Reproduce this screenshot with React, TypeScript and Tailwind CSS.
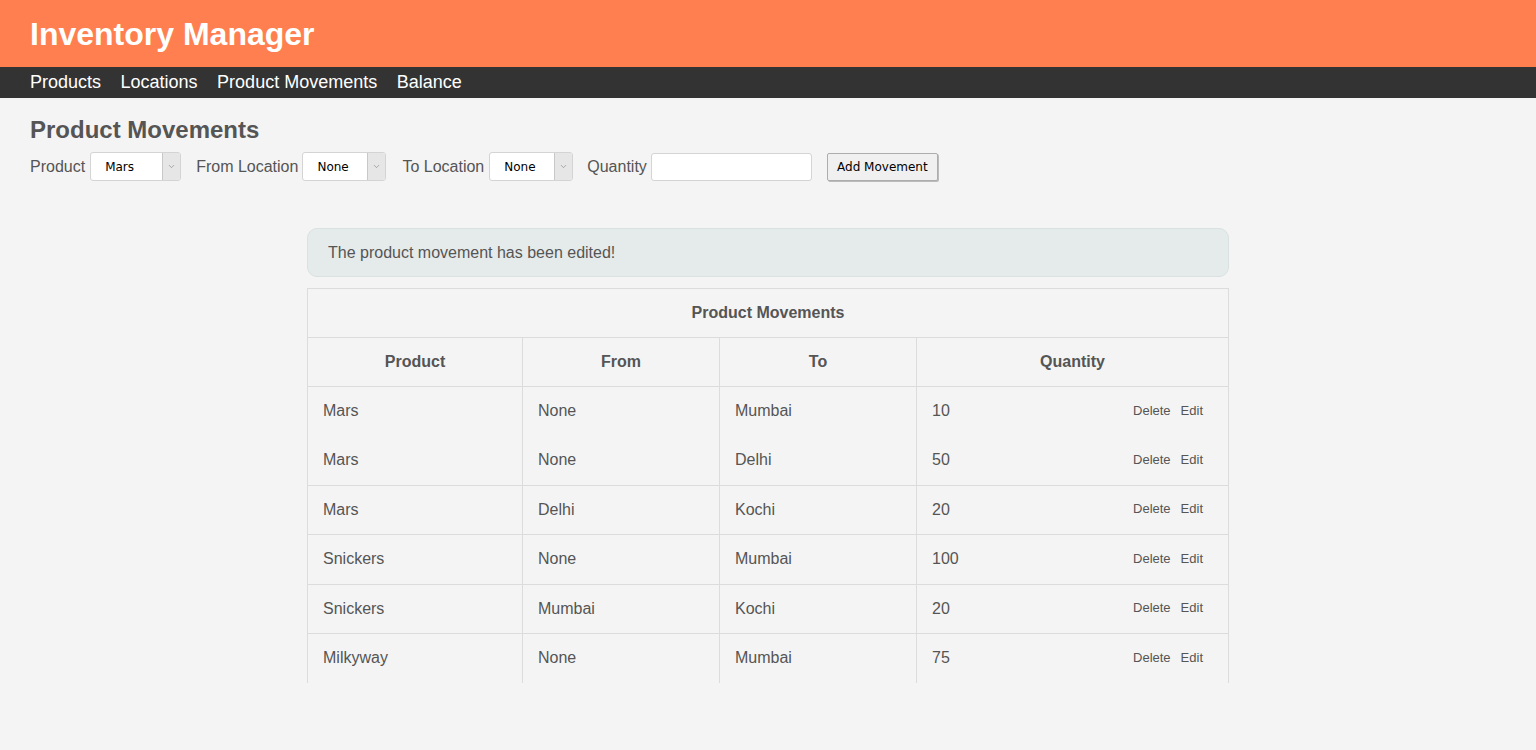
import { ChevronDown } from "lucide-react";

const rows = [
  { product: "Mars", from: "None", to: "Mumbai", qty: "10", border: false },
  { product: "Mars", from: "None", to: "Delhi", qty: "50", border: true },
  { product: "Mars", from: "Delhi", to: "Kochi", qty: "20", border: true },
  { product: "Snickers", from: "None", to: "Mumbai", qty: "100", border: true },
  { product: "Snickers", from: "Mumbai", to: "Kochi", qty: "20", border: true },
  { product: "Milkyway", from: "None", to: "Mumbai", qty: "75", border: false },
];

function FakeSelect({ value, width }: { value: string; width: string }) {
  return (
    <div
      className={`flex h-[29px] ${width} items-stretch overflow-hidden rounded-[3px] border border-[#d4d4d4] bg-white`}
    >
      <span className="flex flex-1 items-center pt-[1px] pl-[14px] text-[12px] text-black [font-family:'DejaVu_Sans',sans-serif]">
        {value}
      </span>
      <span className="flex w-[18px] items-center justify-center border-l border-[#c8c8c8] bg-[#e6e6e6]">
        <ChevronDown size={9} strokeWidth={1.5} className="text-[#777]" />
      </span>
    </div>
  );
}

export default function App() {
  return (
    <div className="min-h-[750px] bg-[#f4f4f4] text-[#555] [font-family:'Liberation_Sans',Arial,sans-serif]">
      <header className="flex h-[67px] items-center bg-[#ff7f50] px-[30px]">
        <h1 className="text-[32px] font-bold text-white">Inventory Manager</h1>
      </header>
      <nav className="flex h-[31px] items-center gap-[19.5px] bg-[#333] px-[30px] text-[18px] text-white">
        <a>Products</a>
        <a>Locations</a>
        <a>Product Movements</a>
        <a>Balance</a>
      </nav>

      <main className="px-[30px] pt-[18px]">
        <h2 className="text-[24px] leading-[28px] font-bold">Product Movements</h2>
        <form className="mt-[8px] flex items-center text-[16px]">
          <label className="mr-[5px]">Product</label>
          <FakeSelect value="Mars" width="w-[91px]" />
          <label className="mr-[4px] ml-[15px]">From Location</label>
          <FakeSelect value="None" width="w-[84px]" />
          <label className="mr-[5px] ml-[16px]">To Location</label>
          <FakeSelect value="None" width="w-[84px]" />
          <label className="mr-[4px] ml-[14px]">Quantity</label>
          <input className="h-[28px] w-[161px] rounded-[3px] border border-[#d4d4d4] bg-white" />
          <button
            type="button"
            className="mt-[1px] ml-[15px] h-[28px] w-[111px] rounded-[2px] border border-[#adadad] bg-[#f0f0f0] text-[12px] text-black shadow-[1px_1px_0_#bbb] [font-family:'DejaVu_Sans',sans-serif]"
          >
            Add Movement
          </button>
        </form>

        <section className="mx-auto mt-[47px] w-[922px]">
          <div className="flex h-[49px] items-center rounded-[10px] border border-[#d9e1e1] bg-[#e5ebeb] px-[20px] text-[16px]">
            The product movement has been edited!
          </div>

          <table className="mt-[11px] w-full border-collapse text-[16px]">
            <thead>
              <tr>
                <th colSpan={4} className="h-[49px] border border-[#dcdcdc] font-bold">
                  Product Movements
                </th>
              </tr>
              <tr>
                <th className="h-[49px] w-[215px] border border-[#dcdcdc] font-bold">Product</th>
                <th className="w-[197px] border border-[#dcdcdc] font-bold">From</th>
                <th className="w-[197px] border border-[#dcdcdc] font-bold">To</th>
                <th className="border border-[#dcdcdc] font-bold">Quantity</th>
              </tr>
            </thead>
            <tbody>
              {rows.map((r, i) => (
                <tr key={i} className={r.border ? "border-b border-[#dcdcdc]" : ""}>
                  <td className="h-[49.4px] border-x border-[#dcdcdc] pl-[15px]">{r.product}</td>
                  <td className="border-x border-[#dcdcdc] pl-[15px]">{r.from}</td>
                  <td className="border-x border-[#dcdcdc] pl-[15px]">{r.to}</td>
                  <td className="border-x border-[#dcdcdc] pl-[15px]">
                    <div className="flex items-center justify-between pr-[25px]">
                      <span>{r.qty}</span>
                      <span className="-mt-[2px] flex gap-[10px] text-[13px]">
                        <a>Delete</a>
                        <a>Edit</a>
                      </span>
                    </div>
                  </td>
                </tr>
              ))}
            </tbody>
          </table>
        </section>
      </main>
    </div>
  );
}
